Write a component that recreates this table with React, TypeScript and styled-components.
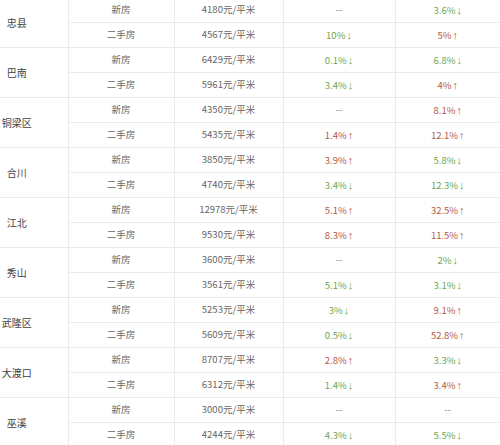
import * as React from "react";
import styled, { createGlobalStyle } from "styled-components";

const GlobalStyle = createGlobalStyle`
	html, body {
		margin: 0;
		padding: 0;
		background: #fff;
	}
	body {
		font-family: "Noto Sans CJK SC", "Liberation Sans", sans-serif;
		width: 500px;
		height: 445px;
		overflow: hidden;
	}
`;

const Frame = styled.div`
	width: 500px;
	height: 445px;
	overflow: hidden;
`;

const Table = styled.table`
	margin-top: -3px;
	width: 500px;
	border-collapse: collapse;
	table-layout: fixed;
	font-size: 9.5px;
	color: #666;
`;

const Row = styled.tr`
	height: 25px;
`;

const Cell = styled.td`
	border: 1px solid #ebebeb;
	padding: 0;
	text-align: center;
	vertical-align: middle;
	white-space: nowrap;
	line-height: 1;
`;

const AreaCell = styled(Cell)`
	border-left: none;
	padding-right: 34px;
	color: #3f3f3f;
	font-size: 10px;
`;

const LastCell = styled(Cell)`
	border-right: none;
`;

const Change = styled.span<{ $dir?: "up" | "down" }>`
	color: ${(p) => (p.$dir === "up" ? "#b65a46" : p.$dir === "down" ? "#6fa64e" : "#888")};
`;

const Arrow = styled.span`
	font-family: "Liberation Sans", sans-serif;
	font-size: 11px;
	margin-left: 1px;
`;

type Delta = string | null;

type Line = { kind: string; price: string; mom: Delta; yoy: Delta };

// "+" at the end means up (red), "-" means down (green)
const data: { area: string; rows: [Line, Line] }[] = [
	{ area: "忠县", rows: [
		{ kind: "新房", price: "4180", mom: null, yoy: "3.6%-" },
		{ kind: "二手房", price: "4567", mom: "10%-", yoy: "5%+" },
	] },
	{ area: "巴南", rows: [
		{ kind: "新房", price: "6429", mom: "0.1%-", yoy: "6.8%-" },
		{ kind: "二手房", price: "5961", mom: "3.4%-", yoy: "4%+" },
	] },
	{ area: "铜梁区", rows: [
		{ kind: "新房", price: "4350", mom: null, yoy: "8.1%+" },
		{ kind: "二手房", price: "5435", mom: "1.4%+", yoy: "12.1%+" },
	] },
	{ area: "合川", rows: [
		{ kind: "新房", price: "3850", mom: "3.9%+", yoy: "5.8%-" },
		{ kind: "二手房", price: "4740", mom: "3.4%-", yoy: "12.3%-" },
	] },
	{ area: "江北", rows: [
		{ kind: "新房", price: "12978", mom: "5.1%+", yoy: "32.5%+" },
		{ kind: "二手房", price: "9530", mom: "8.3%+", yoy: "11.5%+" },
	] },
	{ area: "秀山", rows: [
		{ kind: "新房", price: "3600", mom: null, yoy: "2%-" },
		{ kind: "二手房", price: "3561", mom: "5.1%-", yoy: "3.1%-" },
	] },
	{ area: "武隆区", rows: [
		{ kind: "新房", price: "5253", mom: "3%-", yoy: "9.1%+" },
		{ kind: "二手房", price: "5609", mom: "0.5%-", yoy: "52.8%+" },
	] },
	{ area: "大渡口", rows: [
		{ kind: "新房", price: "8707", mom: "2.8%+", yoy: "3.3%-" },
		{ kind: "二手房", price: "6312", mom: "1.4%-", yoy: "3.4%+" },
	] },
	{ area: "巫溪", rows: [
		{ kind: "新房", price: "3000", mom: null, yoy: null },
		{ kind: "二手房", price: "4244", mom: "4.3%-", yoy: "5.5%-" },
	] },
];

const Pct = ({ value }: { value: Delta }) => {
	if (!value) return <Change>--</Change>;
	const up = value.endsWith("+");
	return (
		<Change $dir={up ? "up" : "down"}>
			{value.slice(0, -1)}
			<Arrow>{up ? "↑" : "↓"}</Arrow>
		</Change>
	);
};

export default function App() {
	return (
		<Frame>
			<GlobalStyle />
			<Table>
				<colgroup>
					<col style={{ width: 68 }} />
					<col style={{ width: 106 }} />
					<col style={{ width: 109 }} />
					<col style={{ width: 112 }} />
					<col style={{ width: 105 }} />
				</colgroup>
				<tbody>
					{data.map((g) =>
						g.rows.map((r, i) => (
							<Row key={g.area + r.kind}>
								{i === 0 && <AreaCell rowSpan={2}>{g.area}</AreaCell>}
								<Cell>{r.kind}</Cell>
								<Cell>{r.price}元/平米</Cell>
								<Cell><Pct value={r.mom} /></Cell>
								<LastCell><Pct value={r.yoy} /></LastCell>
							</Row>
						))
					)}
				</tbody>
			</Table>
		</Frame>
	);
}
